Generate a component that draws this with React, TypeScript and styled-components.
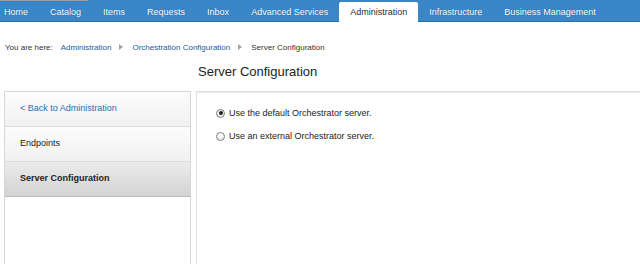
import styled, { createGlobalStyle } from "styled-components";

const GlobalStyle = createGlobalStyle`
  html, body {
    margin: 0;
    padding: 0;
    background: #ffffff;
  }
  body {
    font-family: "Liberation Sans", Arial, sans-serif;
  }
  #root {
    height: 100vh;
  }
`;

const navItems = [
  "Home",
  "Catalog",
  "Items",
  "Requests",
  "Inbox",
  "Advanced Services",
  "Administration",
  "Infrastructure",
  "Business Management",
];

const crumbs = ["Administration", "Orchestration Configuration"];

const Page = styled.div`
  display: flex;
  flex-direction: column;
  height: 100%;
  overflow: hidden;
`;

const NavBar = styled.nav`
  position: relative;
  display: flex;
  align-items: flex-end;
  height: 21px;
  background: #3a86c7;
  border-bottom: 1px solid #2a6cae;

  &::before {
    content: "";
    position: absolute;
    left: 0;
    top: 0;
    width: 88px;
    height: 1px;
    background: #9b9fa3;
  }
`;

const NavItem = styled.div<{ $active?: boolean }>`
  display: flex;
  align-items: center;
  height: 19px;
  padding: 0 11px;
  margin-bottom: ${({ $active }) => ($active ? "-1px" : "0")};
  font-size: 9px;
  white-space: nowrap;
  color: ${({ $active }) => ($active ? "#2b2b2b" : "#ffffff")};
  background: ${({ $active }) => ($active ? "#ffffff" : "transparent")};
  border-radius: 2px 2px 0 0;
  text-shadow: ${({ $active }) =>
    $active ? "none" : "0 0 1px rgba(20, 60, 110, 0.6)"};
  padding-bottom: ${({ $active }) => ($active ? "1px" : "0")};

  &:first-child {
    padding-left: 4px;
  }
`;

const Breadcrumb = styled.div`
  display: flex;
  align-items: center;
  height: 14px;
  margin-top: 18px;
  padding-left: 5px;
  font-size: 8px;
  color: #333333;
  white-space: nowrap;
`;

const Here = styled.span`
  margin-right: 8px;
`;

const Crumb = styled.a`
  color: #1d5b99;
  text-decoration: none;
`;

const Arrow = styled.span`
  display: inline-block;
  width: 0;
  height: 0;
  margin: 0 9px 0 8px;
  border-top: 3px solid transparent;
  border-bottom: 3px solid transparent;
  border-left: 4px solid #a3a3a3;
`;

const Content = styled.div`
  flex: 1;
  display: grid;
  grid-template-columns: 187px 1fr;
  grid-template-rows: 37px 1fr;
  column-gap: 5px;
  padding-left: 4px;
  min-height: 0;
`;

const Title = styled.h1`
  grid-column: 2;
  margin: 0;
  padding: 10px 0 0 2px;
  font-size: 13px;
  font-weight: normal;
  color: #222222;
  white-space: nowrap;
`;

const Sidebar = styled.div`
  grid-column: 1;
  display: flex;
  flex-direction: column;
  border: 1px solid #d6d6d6;
  border-bottom: none;
  background: #ffffff;
`;

const SideRow = styled.div<{ $selected?: boolean }>`
  display: flex;
  align-items: center;
  box-sizing: border-box;
  height: 35px;
  padding: 0 0 3px 15px;
  font-size: 9px;
  font-weight: ${({ $selected }) => ($selected ? "bold" : "normal")};
  color: #222222;
  border-bottom: 1px solid
    ${({ $selected }) => ($selected ? "#bdbdbd" : "#dedede")};
  background: ${({ $selected }) =>
    $selected
      ? "linear-gradient(#ebebeb, #d3d3d3)"
      : "linear-gradient(#fcfcfc, #f1f1f1)"};
`;

const SideLink = styled.a`
  color: #2c6dac;
  text-decoration: none;
`;

const MainPanel = styled.div`
  grid-column: 2;
  border-top: 1px solid #dcdcdc;
  box-shadow: inset 0 1px 0 #eeeeee;
  border-left: 1px solid #e2e2e2;
  padding: 16px 0 0 19px;
  display: flex;
  flex-direction: column;
  gap: 13px;
`;

const Option = styled.label`
  display: flex;
  align-items: center;
  gap: 4px;
  height: 10px;
  font-size: 9px;
  color: #222222;
  white-space: nowrap;
`;

const RadioDot = styled.span<{ $checked?: boolean }>`
  position: relative;
  box-sizing: border-box;
  width: 9px;
  height: 9px;
  border-radius: 50%;
  border: 1px solid #7d7d7d;
  background: linear-gradient(#ffffff, #ececec);

  &::after {
    content: "";
    display: ${({ $checked }) => ($checked ? "block" : "none")};
    position: absolute;
    left: 1.5px;
    top: 1.5px;
    width: 4px;
    height: 4px;
    border-radius: 50%;
    background: #1e1e1e;
  }
`;

export default function App() {
  return (
    <>
      <GlobalStyle />
      <Page>
        <NavBar>
          {navItems.map((item) => (
            <NavItem key={item} $active={item === "Administration"}>
              {item}
            </NavItem>
          ))}
        </NavBar>
        <Breadcrumb>
          <Here>You are here:</Here>
          {crumbs.map((c) => (
            <span key={c}>
              <Crumb href="#">{c}</Crumb>
              <Arrow />
            </span>
          ))}
          <span>Server Configuration</span>
        </Breadcrumb>
        <Content>
          <Title>Server Configuration</Title>
          <Sidebar>
            <SideRow>
              <SideLink href="#">&lt; Back to Administration</SideLink>
            </SideRow>
            <SideRow>Endpoints</SideRow>
            <SideRow $selected>Server Configuration</SideRow>
          </Sidebar>
          <MainPanel>
            <Option>
              <RadioDot $checked />
              Use the default Orchestrator server.
            </Option>
            <Option>
              <RadioDot />
              Use an external Orchestrator server.
            </Option>
          </MainPanel>
        </Content>
      </Page>
    </>
  );
}
